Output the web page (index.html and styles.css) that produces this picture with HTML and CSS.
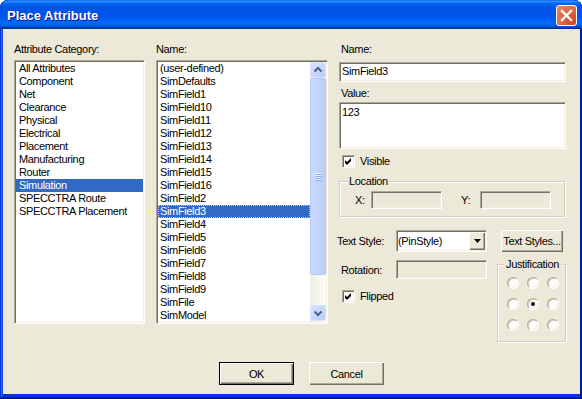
FILE: index.html
```html
<!DOCTYPE html>
<html lang="en">
<head>
    <meta charset="UTF-8">
    <title>Place Attribute</title>
    <link rel="stylesheet" href="styles.css">
</head>
<body>
    <div class="window">
        <div class="titlebar">
            <span class="title">Place Attribute</span>
            <span class="close">
                <svg width="19" height="19" viewBox="0 0 19 19"><path d="M5 5 L14 14 M14 5 L5 14" stroke="#fff" stroke-width="2.4" stroke-linecap="square"/></svg>
            </span>
        </div>
        <div class="client">
            <div class="panes">
                <div class="col-cat">
                    <div class="label">Attribute Category:</div>
                    <ul class="listbox cat-list">
                        <li>All Attributes</li>
                        <li>Component</li>
                        <li>Net</li>
                        <li>Clearance</li>
                        <li>Physical</li>
                        <li>Electrical</li>
                        <li>Placement</li>
                        <li>Manufacturing</li>
                        <li>Router</li>
                        <li class="sel">Simulation</li>
                        <li>SPECCTRA Route</li>
                        <li>SPECCTRA Placement</li>
                    </ul>
                </div>
                <div class="col-name">
                    <div class="label">Name:</div>
                    <div class="listbox name-list">
                        <ul class="items">
                            <li>(user-defined)</li>
                            <li>SimDefaults</li>
                            <li>SimField1</li>
                            <li>SimField10</li>
                            <li>SimField11</li>
                            <li>SimField12</li>
                            <li>SimField13</li>
                            <li>SimField14</li>
                            <li>SimField15</li>
                            <li>SimField16</li>
                            <li>SimField2</li>
                            <li class="sel focus">SimField3</li>
                            <li>SimField4</li>
                            <li>SimField5</li>
                            <li>SimField6</li>
                            <li>SimField7</li>
                            <li>SimField8</li>
                            <li>SimField9</li>
                            <li>SimFile</li>
                            <li>SimModel</li>
                        </ul>
                        <div class="vscroll">
                            <div class="sb-btn">
                                <svg width="14" height="14" viewBox="0 0 14 14"><path d="M3.5 8.5 L7 5 L10.5 8.5" fill="none" stroke="#4D6185" stroke-width="2"/></svg>
                            </div>
                            <div class="sb-thumb">
                                <svg width="8" height="8" viewBox="0 0 8 8">
                                    <rect x="0" y="0" width="7" height="1" fill="#EEF4FE"/>
                                    <rect x="1" y="1" width="7" height="1" fill="#8CB0F8"/>
                                    <rect x="0" y="2" width="7" height="1" fill="#EEF4FE"/>
                                    <rect x="1" y="3" width="7" height="1" fill="#8CB0F8"/>
                                    <rect x="0" y="4" width="7" height="1" fill="#EEF4FE"/>
                                    <rect x="1" y="5" width="7" height="1" fill="#8CB0F8"/>
                                    <rect x="0" y="6" width="7" height="1" fill="#EEF4FE"/>
                                    <rect x="1" y="7" width="7" height="1" fill="#8CB0F8"/>
                                </svg>
                            </div>
                            <div class="sb-track"></div>
                            <div class="sb-btn">
                                <svg width="14" height="14" viewBox="0 0 14 14"><path d="M3.5 5.5 L7 9 L10.5 5.5" fill="none" stroke="#4D6185" stroke-width="2"/></svg>
                            </div>
                        </div>
                    </div>
                </div>
                <div class="col-props">
                    <div class="label prop-label">Name:</div>
                    <div class="field name-field">SimField3</div>
                    <div class="label prop-label value-label">Value:</div>
                    <div class="field value-field">123</div>
                    <label class="check visible-check">
                        <span class="box"><svg width="11" height="11" viewBox="0 0 11 11"><path d="M2 4 L4 6 L8 2 L8 5 L4 9 L2 7 Z" fill="#000"/></svg></span>
                        <span>Visible</span>
                    </label>
                    <fieldset class="group location">
                        <legend>Location</legend>
                        <div class="coord-row">
                            <span class="coord-label">X:</span>
                            <span class="field disabled coord"></span>
                            <span class="coord-label coord-y">Y:</span>
                            <span class="field disabled coord"></span>
                        </div>
                    </fieldset>
                    <div class="lower">
                        <div class="lower-left">
                            <div class="form-row">
                                <span class="row-label">Text Style:</span>
                                <div class="field combo">
                                    <span class="combo-text">(PinStyle)</span>
                                    <span class="combo-btn"><svg width="7" height="4" viewBox="0 0 7 4"><path d="M0 0 H7 L3.5 4 Z" fill="#000"/></svg></span>
                                </div>
                            </div>
                            <div class="form-row rot-row">
                                <span class="row-label rot-label">Rotation:</span>
                                <span class="field disabled rotation"></span>
                            </div>
                            <label class="check flip-check">
                                <span class="box"><svg width="11" height="11" viewBox="0 0 11 11"><path d="M2 4 L4 6 L8 2 L8 5 L4 9 L2 7 Z" fill="#000"/></svg></span>
                                <span>Flipped</span>
                            </label>
                        </div>
                        <div class="lower-right">
                            <button class="btn styles-btn">Text Styles...</button>
                            <fieldset class="group justify">
                                <legend>Justification</legend>
                                <div class="radios">
                                    <span class="radio"></span>
                                    <span class="radio"></span>
                                    <span class="radio"></span>
                                    <span class="radio"></span>
                                    <span class="radio on"></span>
                                    <span class="radio"></span>
                                    <span class="radio"></span>
                                    <span class="radio"></span>
                                    <span class="radio"></span>
                                </div>
                            </fieldset>
                        </div>
                    </div>
                </div>
            </div>
            <div class="actions">
                <button class="btn action default">OK</button>
                <button class="btn action">Cancel</button>
            </div>
        </div>
    </div>
</body>
</html>
```
FILE: styles.css
```css
* {
    box-sizing: border-box;
}
html, body {
    margin: 0;
    background: #fff;
}
body {
    font-family: "Liberation Sans", Arial, sans-serif;
    font-size: 11px;
    letter-spacing: -0.35px;
    color: #000;
}
.window {
    width: 582px;
    height: 399px;
    display: flex;
    flex-direction: column;
    padding: 0 2px 5px 3px;
    background: #0831D9;
    border-radius: 8px 8px 0 0;
    overflow: hidden;
    box-shadow: inset -1px -1px #00138C, inset 1px 1px #0831D9, inset -2px -2px #001EA0,
                inset 2px 2px #166AEE, inset -3px -3px #003BDA, inset 3px 3px #0855DD;
}
.titlebar {
    height: 29px;
    flex: none;
    margin: 0 -2px 0 -3px;
    padding: 3px 5px 0 7px;
    display: flex;
    align-items: flex-start;
    border-radius: 8px 8px 0 0;
    background: linear-gradient(to bottom, #0058EE 0%, #3593FF 4%, #288EFF 6%, #127DFF 8%,
        #036FFC 10%, #0262EE 14%, #0057E5 20%, #0054E3 24%, #0055EB 56%, #005BF5 66%,
        #026AFE 76%, #0062EF 86%, #0052D6 92%, #0040AB 94%, #003092 100%);
}
.title {
    font: bold 13px/26px "Liberation Sans", Arial, sans-serif;
    letter-spacing: 0;
    color: #fff;
    text-shadow: 1px 1px #0F1089;
}
.close {
    margin-left: auto;
    margin-top: 2px;
    width: 21px;
    height: 21px;
    display: flex;
    align-items: center;
    justify-content: center;
    border: 1px solid #fff;
    border-radius: 3px;
    background: radial-gradient(circle at 85% 85%, #CC4623 0%, #E0603A 45%, #E88A6B 100%);
}
.client {
    flex: 1;
    display: flex;
    flex-direction: column;
    padding: 14px 0 9px 11px;
    background: #ECE9D8;
}
.panes {
    display: flex;
}
.col-cat {
    width: 131px;
    margin-right: 11px;
}
.col-name {
    width: 172px;
    margin-right: 11px;
}
.col-props {
    width: 227px;
    display: flex;
    flex-direction: column;
}
.label {
    height: 13px;
    line-height: 13px;
}
.col-cat .label, .col-name .label {
    margin-bottom: 4px;
}
.prop-label {
    padding-left: 2px;
}

/* list boxes */
.listbox {
    height: 264px;
    margin: 0;
    padding: 1px;
    list-style: none;
    background: #fff;
    border: 1px solid;
    border-color: #ACA899 #fff #fff #ACA899;
    box-shadow: inset 1px 1px #716F64, inset -1px -1px #F1EFE2;
}
.listbox li {
    height: 13px;
    line-height: 13px;
    padding-left: 3px;
    white-space: nowrap;
}
.listbox li.sel {
    background: #316AC5;
    color: #fff;
}
.listbox li.focus {
    outline: 1px dotted #E8C97A;
    outline-offset: -1px;
}
.name-list {
    display: flex;
}
.items {
    flex: 1;
    margin: 0;
    padding: 0;
    list-style: none;
    overflow: hidden;
}
.name-list .items li {
    padding-left: 2px;
}
.vscroll {
    width: 16px;
    display: flex;
    flex-direction: column;
    padding-bottom: 1px;
    background: linear-gradient(to right, #EEEDE5, #FDFDFA);
}
.sb-btn, .sb-thumb {
    border: 1px solid #DCE5FD;
    border-radius: 2px;
    background: linear-gradient(135deg, #D6E2FE, #B9CDFB);
    display: flex;
    align-items: center;
    justify-content: center;
}
.sb-btn {
    height: 16px;
}
.sb-thumb {
    height: 197px;
    border-color: #B4C8F6;
    background: linear-gradient(to right, #CAD9FC, #BCCFFA);
}
.sb-track {
    flex: 1;
}

/* edit fields */
.field {
    display: block;
    background: #fff;
    border: 1px solid;
    border-color: #ACA899 #fff #fff #ACA899;
    box-shadow: inset 1px 1px #716F64, inset -1px -1px #F1EFE2;
    line-height: 13px;
}
.field.disabled {
    background: #ECE9D8;
}
.name-field {
    margin-top: 6px;
    height: 20px;
    padding: 2px 2px 0;
}
.value-label {
    margin-top: 5px;
}
.value-field {
    margin-top: 2px;
    height: 47px;
    padding: 3px 2px 0;
}

/* check boxes */
.check {
    display: flex;
    align-items: center;
    gap: 5px;
    height: 13px;
    line-height: 13px;
}
.check .box {
    width: 13px;
    height: 13px;
    display: flex;
    align-items: center;
    justify-content: center;
    background: #fff;
    border: 1px solid;
    border-color: #ACA899 #fff #fff #ACA899;
    box-shadow: inset 1px 1px #716F64, inset -1px -1px #F1EFE2;
}
.visible-check {
    margin: 6px 0 0 3px;
}

/* group boxes */
.group {
    margin: 0;
    min-width: 0;
    padding: 0;
    border: 1px solid #D0D0BF;
    box-shadow: inset 1px 1px #fff, 1px 1px #fff;
}
.group legend {
    line-height: 13px;
    padding: 0 1px;
    margin-left: 8px;
    background: #ECE9D8;
}
.location {
    margin: 7px 1px 0 0;
    padding: 3px 0 7px;
}
.coord-row {
    display: flex;
    align-items: center;
    padding-left: 15px;
}
.coord-label {
    width: 16px;
}
.coord-y {
    width: 19px;
    margin-left: 19px;
}
.coord {
    width: 71px;
    height: 18px;
}

/* lower part */
.lower {
    display: flex;
    margin-top: 13px;
}
.lower-left {
    width: 150px;
    margin-left: -2px;
}
.form-row {
    display: flex;
    align-items: center;
}
.row-label {
    width: 59px;
}
.rot-label {
    padding-left: 4px;
}
.rot-row {
    margin-top: 8px;
}
.combo {
    width: 91px;
    height: 22px;
    padding: 1px;
    display: flex;
    align-items: center;
}
.combo-text {
    flex: 1;
}
.combo-btn {
    width: 16px;
    height: 18px;
    display: flex;
    align-items: center;
    justify-content: center;
    background: #ECE9D8;
    box-shadow: inset 1px 1px #fff, inset -1px -1px #716F64, inset -2px -2px #ACA899;
}
.rotation {
    width: 91px;
    height: 19px;
}
.flip-check {
    margin: 11px 0 0 5px;
}
.lower-right {
    width: 69px;
    margin-left: 10px;
    display: flex;
    flex-direction: column;
}
.justify {
    margin-top: 6px;
    padding: 0 0 10px;
}
.justify legend {
    margin-left: 6px;
    padding: 0 2px;
}
.radios {
    display: grid;
    grid-template-columns: repeat(3, 12px);
    gap: 9px 8px;
    padding: 6px 0 0 9px;
}
.radio {
    width: 12px;
    height: 12px;
    display: flex;
    align-items: center;
    justify-content: center;
    border-radius: 50%;
    background: #fff;
    border: 1px solid;
    border-color: #ACA899 #fff #fff #ACA899;
    box-shadow: inset 1px 1px #D4D0C8, inset -1px -1px #F1EFE2;
}
.radio.on:after {
    content: "";
    width: 4px;
    height: 4px;
    border-radius: 50%;
    background: #000;
}

/* buttons */
.btn {
    font: inherit;
    letter-spacing: inherit;
    color: #000;
    padding: 0;
    border: none;
    white-space: nowrap;
    background: #ECE9D8;
    box-shadow: inset 1px 1px #fff, inset -1px -1px #716F64, inset -2px -2px #ACA899;
}
.styles-btn {
    width: 62px;
    height: 22px;
    margin-left: 4px;
}
.actions {
    margin-top: auto;
    display: flex;
    gap: 15px;
    padding-left: 205px;
}
.action {
    width: 75px;
    height: 23px;
}
.btn.default {
    border: 1px solid #000;
}
```
